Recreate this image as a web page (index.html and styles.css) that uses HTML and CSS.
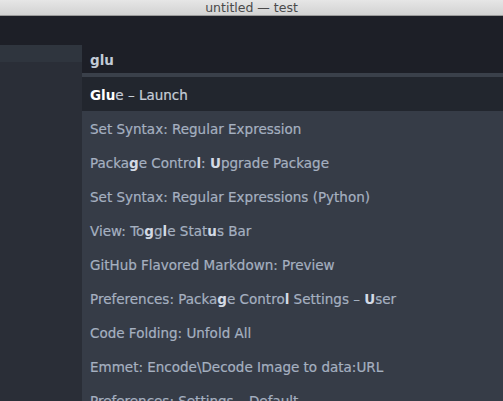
FILE: index.html
```html
<!DOCTYPE html>
<html>
<head>
<meta charset="utf-8">
<link rel="stylesheet" href="styles.css">
</head>
<body>
<div class="titlebar">untitled — test</div>
<div class="window">
  <div class="tabbar"></div>
  <div class="main">
    <div class="sidebar">
      <div class="side-top"></div>
      <div class="side-rest"></div>
    </div>
    <div class="palette">
      <div class="input">glu</div>
      <div class="sep"></div>
      <div class="list">
        <div class="row selected"><b>Glu</b>e – Launch</div>
        <div class="row">Set Syntax: Regular Expression</div>
        <div class="row">Packa<b>g</b>e Contro<b>l</b>: <b>U</b>pgrade Package</div>
        <div class="row">Set Syntax: Regular Expressions (Python)</div>
        <div class="row">View: To<b>g</b>g<b>l</b>e Stat<b>u</b>s Bar</div>
        <div class="row">GitHub Flavored Markdown: Preview</div>
        <div class="row">Preferences: Packa<b>g</b>e Contro<b>l</b> Settings – <b>U</b>ser</div>
        <div class="row">Code Folding: Unfold All</div>
        <div class="row">Emmet: Encode\Decode Image to data:URL</div>
        <div class="row">Preferences: Settings – Default</div>
      </div>
    </div>
  </div>
</div>
</body>
</html>
```
FILE: styles.css
```css
html, body {
  margin: 0;
  padding: 0;
  width: 503px;
  height: 401px;
  overflow: hidden;
  background: #1d1f27;
}
body {
  display: flex;
  flex-direction: column;
  font-family: "DejaVu Sans", "Noto Sans", sans-serif;
}
.titlebar {
  height: 15px;
  flex: none;
  background: linear-gradient(#e6e6e6, #d2d2d2);
  border-bottom: 1px solid #9a9a9a;
  color: #4a4a4a;
  font-size: 12.5px;
  line-height: 15px;
  text-align: center;
}
.window {
  flex: 1;
  display: flex;
  flex-direction: column;
  min-height: 0;
}
.tabbar {
  height: 29px;
  flex: none;
  background: #1d1f27;
}
.main {
  flex: 1;
  display: flex;
  min-height: 0;
}
.sidebar {
  width: 82px;
  flex: none;
  display: flex;
  flex-direction: column;
}
.side-top {
  height: 17px;
  background: #2f353e;
}
.side-rest {
  flex: 1;
  background: #2a2e37;
}
.palette {
  flex: 1;
  display: flex;
  flex-direction: column;
  background: #363c47;
}
.input {
  height: 28px;
  flex: none;
  box-sizing: border-box;
  padding: 3px 0 0 8px;
  background: #1d1f27;
  color: #c3cbd6;
  font-size: 13.5px;
  font-weight: bold;
  line-height: 25px;
}
.sep {
  height: 4px;
  flex: none;
  background: #3a404a;
}
.list {
  display: flex;
  flex-direction: column;
}
.row {
  height: 34px;
  flex: none;
  box-sizing: border-box;
  padding: 3px 0 0 8px;
  line-height: 31px;
  font-size: 13.5px;
  color: #a5b0c0;
  -webkit-text-stroke: 0.2px #a5b0c0;
  white-space: nowrap;
}
.row b {
  color: #d3dae5;
  -webkit-text-stroke: 0;
}
.row.selected {
  background: #22262e;
  color: #c6cdd8;
  -webkit-text-stroke: 0.2px #c6cdd8;
}
.row.selected b {
  color: #ffffff;
  -webkit-text-stroke: 0;
}
```
